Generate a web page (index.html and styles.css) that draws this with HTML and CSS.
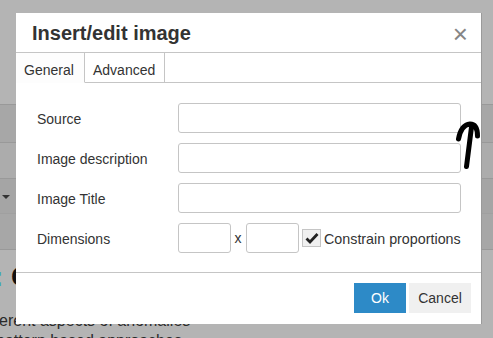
FILE: index.html
```html
<!DOCTYPE html>
<html>
<head>
<meta charset="utf-8">
<link rel="stylesheet" href="styles.css">
</head>
<body>
<div class="page">
  <div class="top"></div>
  <div class="bar b1"></div>
  <div class="bar b2"></div>
  <div class="bar b3"><span class="caret"></span><span class="burger"><i></i><i></i><i></i></span></div>
  <div class="bar b4"></div>
  <div class="content">
    <div class="heading"><span class="colon">:</span> C</div>
    <p class="text first">different aspects of anomalies</p>
    <p class="text second">pattern based approaches</p>
  </div>
</div>

<div class="dialog">
  <div class="head">
    <span class="title">Insert/edit image</span>
    <span class="close">×</span>
  </div>
  <div class="tabs">
    <div class="tab active">General</div>
    <div class="tab">Advanced</div>
  </div>
  <div class="body">
    <div class="row"><label>Source</label><div class="field"></div></div>
    <div class="row"><label>Image description</label><div class="field"></div></div>
    <div class="row"><label>Image Title</label><div class="field"></div></div>
    <div class="row">
      <label>Dimensions</label>
      <div class="dims">
        <div class="field small"></div>
        <span class="x">x</span>
        <div class="field small"></div>
        <span class="check"><svg width="14" height="12" viewBox="0 0 14 12"><path d="M1.5 6.5 L5 10 L12.5 2" fill="none" stroke="#222" stroke-width="2.8"/></svg></span>
        <span class="clabel">Constrain proportions</span>
      </div>
    </div>
  </div>
  <div class="foot">
    <button class="btn ok">Ok</button>
    <button class="btn cancel">Cancel</button>
  </div>
</div>

<svg class="arrow" width="30" height="52" viewBox="452 120 30 52">
  <path d="M466.5 166.5 L471.5 127 M458.5 139 Q461 125 470 124 Q477.5 124 477.5 136" fill="none" stroke="#000" stroke-width="5" stroke-linecap="round" stroke-linejoin="round"/>
</svg>
</body>
</html>
```

FILE: styles.css
```css
* { box-sizing: border-box; }
html, body { margin: 0; padding: 0; }
body {
  width: 493px;
  height: 338px;
  overflow: hidden;
  background: #b4b4b4;
  font-family: "Liberation Sans", Arial, sans-serif;
  position: relative;
}
.page { width: 493px; }
.top { height: 104px; background: #b4b4b4; }
.bar { border-top: 1px solid #999; position: relative; }
.b1 { height: 38px; background: #a7a7a7; }
.b2 { height: 36px; background: #acacac; }
.b3 { height: 35px; background: #a5a5a5; }
.b4 { height: 37px; background: #a7a7a7; border-top-color: #a0a0a0; border-bottom: 1px solid #999; }
.caret {
  position: absolute; left: 2px; top: 16px;
  width: 0; height: 0;
  border-left: 4px solid transparent; border-right: 4px solid transparent;
  border-top: 4px solid #333;
}
.burger {
  position: absolute; left: 483px; top: 44px;
  display: flex; flex-direction: column; gap: 2px;
}
.burger i { display: block; width: 12px; height: 3px; background: #222; }
.heading {
  margin: 12px 0 0 -6px;
  font-size: 28px; font-weight: bold; color: #111; line-height: 30px;
  white-space: nowrap;
}
.colon { color: #3aa7b8; }
.text { margin: 0; font-size: 16px; color: #2a2a2a; line-height: 18px; white-space: nowrap; }
.text.first { margin-top: 20px; margin-left: -22px; }
.text.second { margin-top: 2px; margin-left: -4px; }

.dialog {
  position: absolute;
  left: 16px; top: 13px;
  width: 465px; height: 311px;
  background: #fff;
  box-shadow: 1px 0 0 #9a9a9a;
  display: flex; flex-direction: column;
  color: #333;
}
.head {
  height: 40px;
  border-bottom: 1px solid #c5c5c5;
  display: flex; align-items: center; justify-content: space-between;
  padding: 1px 13px 0 16px;
}
.title { font-size: 20px; font-weight: bold; color: #333; }
.close { font-size: 26px; color: #858585; line-height: 20px; margin-top: 1px; }
.tabs {
  display: flex;
  height: 30px;
  border-bottom: 1px solid #c5c5c5;
}
.tab {
  font-size: 14px; color: #333;
  padding: 9px 8px 0 8px;
  border-right: 1px solid #c5c5c5;
  margin-bottom: -1px;
  border-bottom: 1px solid #c5c5c5;
  background: #fff;
}
.tab.active { background: #fdfdfd; border-bottom-color: #fdfdfd; width: 69px; }
.tab + .tab { width: 80px; }
.body {
  padding: 20px 21px 0 21px;
  display: flex; flex-direction: column; gap: 10px;
  height: 190px;
  border-bottom: 1px solid #c5c5c5;
}
.row { display: flex; align-items: center; height: 30px; }
.row label { width: 141px; flex: none; font-size: 14px; color: #333; padding-top: 1px; }
.field {
  width: 283px; height: 30px; flex: none;
  border: 1px solid #c5c5c5; border-radius: 3px; background: #fff;
}
.dims { display: flex; align-items: center; white-space: nowrap; flex: none; }
.field.small { width: 53px; }
.x { font-size: 14px; width: 16px; text-align: center; margin-left: -1px; flex: none; }
.check {
  margin-left: 3px; flex: none;
  width: 19px; height: 18px;
  border: 1px solid #c5c5c5; background: #f0f0f0;
  display: flex; align-items: center; justify-content: center;
}
.clabel { font-size: 14.3px; color: #333; margin-left: 3px; padding-top: 1px; white-space: nowrap; flex: none; }
.foot {
  flex: 1;
  display: flex; justify-content: flex-end; align-items: flex-start;
  padding: 10px 10px 0 0; gap: 3px;
}
.btn {
  font-family: "Liberation Sans", Arial, sans-serif;
  font-size: 14px; height: 30px; border: none; padding: 0; margin: 0;
}
.ok { width: 52px; background: #2d8ac7; color: #fff; }
.cancel { width: 62px; background: #f0f0f0; color: #333; }
.arrow { position: absolute; left: 452px; top: 120px; }
```
